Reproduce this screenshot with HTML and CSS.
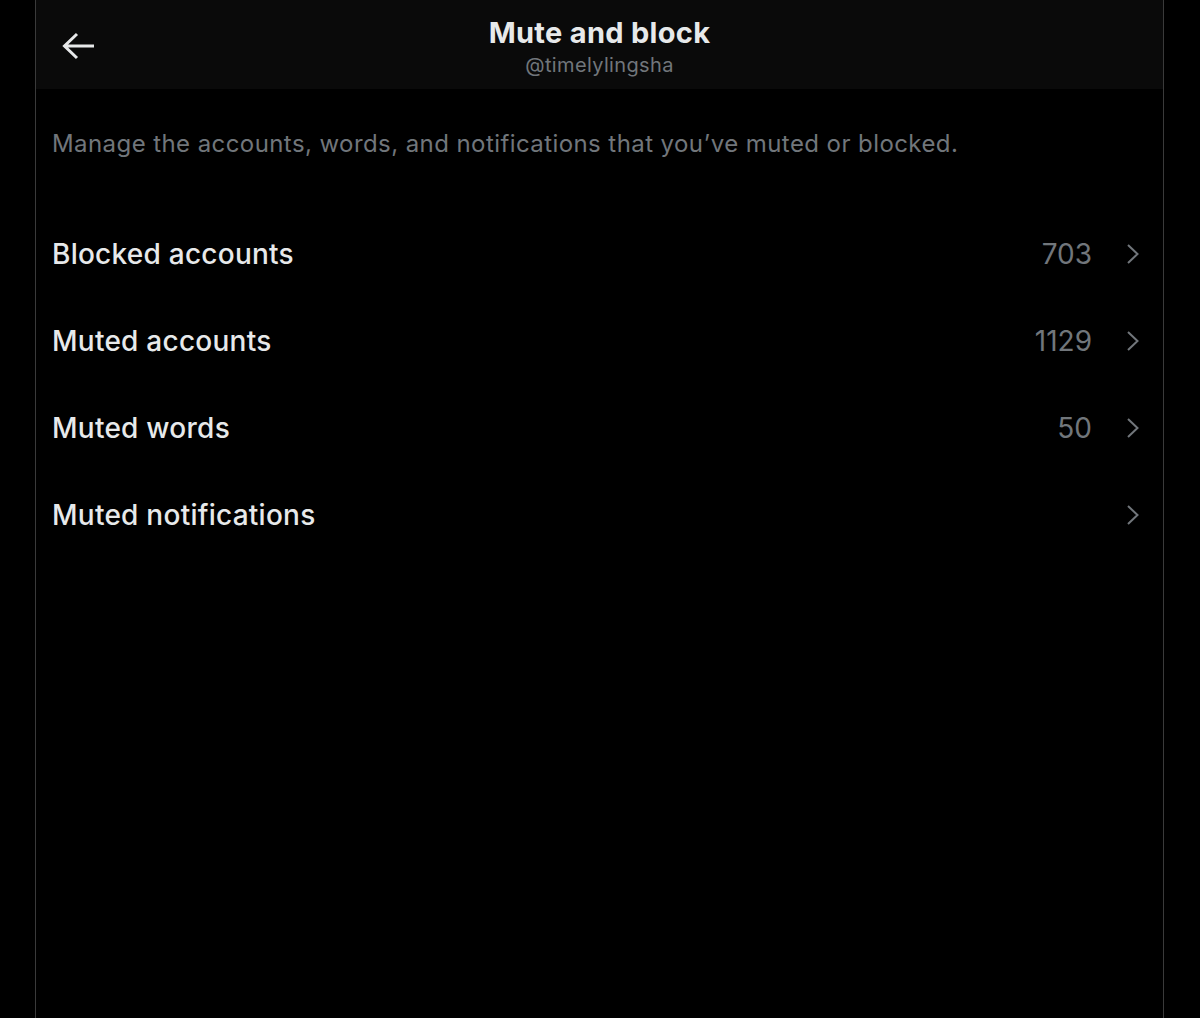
FILE: index.html
```html
<!DOCTYPE html>
<html>
<head>
<meta charset="utf-8">
<link rel="stylesheet" href="styles.css">
</head>
<body>
<div class="page">
  <div class="column">
    <header class="header">
      <button class="back" aria-label="Back">
        <svg width="34" height="28" viewBox="0 0 34 28"><path d="M2 14H32M15 2L2.5 14L15 26" fill="none" stroke="#e7e9ea" stroke-width="3"/></svg>
      </button>
      <div class="titles">
        <div class="title">Mute and block</div>
        <div class="handle">@timelylingsha</div>
      </div>
    </header>
    <p class="desc">Manage the accounts, words, and notifications that you’ve muted or blocked.</p>
    <ul class="list">
      <li class="row"><span class="label">Blocked accounts</span><span class="count">703</span><svg class="chev" width="14" height="22" viewBox="0 0 14 22"><path d="M2 2L11.5 11L2 20" fill="none" stroke="#71767b" stroke-width="2"/></svg></li>
      <li class="row"><span class="label">Muted accounts</span><span class="count">1129</span><svg class="chev" width="14" height="22" viewBox="0 0 14 22"><path d="M2 2L11.5 11L2 20" fill="none" stroke="#71767b" stroke-width="2"/></svg></li>
      <li class="row"><span class="label">Muted words</span><span class="count">50</span><svg class="chev" width="14" height="22" viewBox="0 0 14 22"><path d="M2 2L11.5 11L2 20" fill="none" stroke="#71767b" stroke-width="2"/></svg></li>
      <li class="row"><span class="label">Muted notifications</span><span class="count"></span><svg class="chev" width="14" height="22" viewBox="0 0 14 22"><path d="M2 2L11.5 11L2 20" fill="none" stroke="#71767b" stroke-width="2"/></svg></li>
    </ul>
  </div>
</div>
</body>
</html>
```
FILE: styles.css
```css
html, body {
  margin: 0;
  padding: 0;
  background: #000;
  height: 100%;
}
body {
  font-family: Inter, "Liberation Sans", sans-serif;
  color: #e7e9ea;
}
.page {
  display: flex;
  justify-content: flex-start;
  height: 1018px;
  overflow: hidden;
}
.column {
  margin-left: 35px;
  width: 1127px;
  border-left: 1px solid #3a3a3a;
  border-right: 1px solid #3a3a3a;
  height: 100%;
}
.header {
  height: 89px;
  background: #0a0a0a;
  display: flex;
  align-items: center;
  position: relative;
}
.back {
  background: none;
  border: 0;
  padding: 0;
  margin-left: 26px;
  margin-top: 2px;
  width: 34px;
  height: 28px;
  display: flex;
}
.titles {
  position: absolute;
  left: 0;
  right: 0;
  top: 15px;
  text-align: center;
  pointer-events: none;
}
.title {
  font-size: 29px;
  font-weight: 700;
  line-height: 36px;
  letter-spacing: 0.3px;
  color: #e7e9ea;
}
.handle {
  font-size: 20px;
  line-height: 26px;
  letter-spacing: 0.35px;
  color: #71767b;
  margin-top: 1px;
}
.desc {
  margin: 40px 0 0 16px;
  font-size: 24px;
  line-height: 30px;
  letter-spacing: 0.42px;
  color: #71767b;
}
.list {
  list-style: none;
  margin: 51px 0 0 0;
  padding: 0;
}
.row {
  display: flex;
  align-items: center;
  height: 87px;
  padding: 0 23px 0 16px;
}
.label {
  flex: 1;
  font-size: 28px;
  font-weight: 500;
  letter-spacing: 0.25px;
}
.count {
  font-size: 28px;
  color: #71767b;
  margin-right: 34px;
}
.chev {
  flex: none;
}
```
